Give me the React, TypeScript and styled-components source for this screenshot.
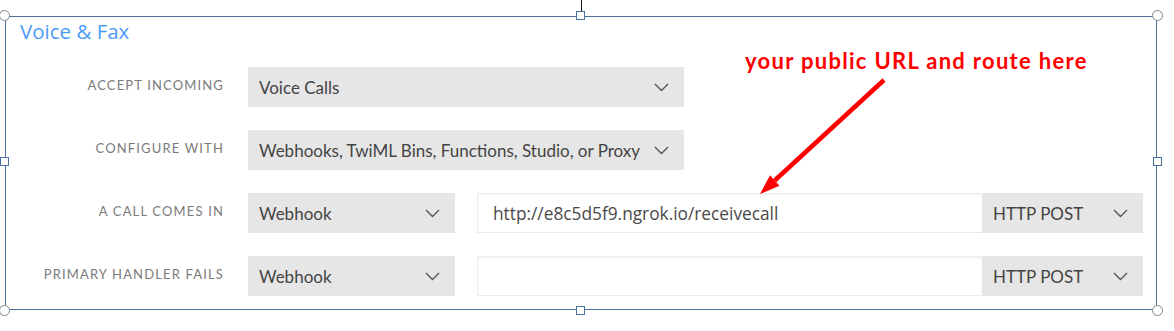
import styled, { createGlobalStyle } from 'styled-components'

const GlobalStyle = createGlobalStyle`
  body {
    margin: 0;
    background: #ffffff;
    font-family: Lato, "Open Sans", sans-serif;
  }
`

const Chevron = () => (
  <svg width="15" height="9" viewBox="0 0 15 9" fill="none">
    <path d="M1 1l6.5 6.5L14 1" stroke="#555" strokeWidth="1.4" />
  </svg>
)

const Select = ({ value, width }: { value: string; width: number }) => (
  <SelectBox $width={width}>
    <span>{value}</span>
    <Chevron />
  </SelectBox>
)

const App = () => {
  return (
    <Page>
      <GlobalStyle />
      <Frame>
        <Title>Voice &amp; Fax</Title>
        <Form>
          <Row>
            <Label>Accept incoming</Label>
            <Select value="Voice Calls" width={436} />
          </Row>
          <Row>
            <Label>Configure with</Label>
            <Select value="Webhooks, TwiML Bins, Functions, Studio, or Proxy" width={436} />
          </Row>
          <Row>
            <Label>A call comes in</Label>
            <Select value="Webhook" width={207} />
            <UrlGroup>
              <UrlInput>http://e8c5d5f9.ngrok.io/receivecall</UrlInput>
              <Select value="HTTP POST" width={161} />
            </UrlGroup>
          </Row>
          <Row>
            <Label>Primary handler fails</Label>
            <Select value="Webhook" width={207} />
            <UrlGroup>
              <UrlInput />
              <Select value="HTTP POST" width={161} />
            </UrlGroup>
          </Row>
        </Form>

        <Note>your public URL and route here</Note>
        <Arrow width="140" height="130" viewBox="0 0 140 130">
          <line x1="134" y1="7" x2="24.7" y2="107.5" stroke="#ff0000" strokeWidth="4.5" />
          <polygon points="10,121 20,102.3 29.4,112.7" fill="#ff0000" />
        </Arrow>

        {/* selection handles */}
        <RotateStem />
        <Corner $x="left" $y="top" />
        <Corner $x="right" $y="top" />
        <Corner $x="left" $y="bottom" />
        <Corner $x="right" $y="bottom" />
        <EdgeHandle style={{ left: 570, top: -6 }} />
        <EdgeHandle style={{ left: 570, bottom: -6 }} />
        <EdgeHandle style={{ left: -6, top: 140 }} />
        <EdgeHandle style={{ right: -6, top: 140 }} />
      </Frame>
    </Page>
  )
}

const Page = styled.div`
  width: 1174px;
  height: 331px;
  padding: 16px 0 0 5px;
  box-sizing: border-box;
`
const Frame = styled.div`
  position: relative;
  box-sizing: border-box;
  width: 1152px;
  height: 294px;
  border: 1px solid #4a6f9b;
  padding: 4px 12px 0 0;
`
const Title = styled.h1`
  margin: 0 0 26px 14px;
  font-family: "Open Sans", sans-serif;
  font-weight: 400;
  font-size: 20.5px;
  line-height: 20px;
  color: #4a9cf6;
`
const Form = styled.div`
  display: flex;
  flex-direction: column;
  gap: 23px;
`
const Row = styled.div`
  display: flex;
  align-items: center;
  height: 40px;
`
const Label = styled.div`
  width: 218px;
  margin-right: 24px;
  text-align: right;
  text-transform: uppercase;
  font-size: 13px;
  letter-spacing: 1.15px;
  color: #7b7b7b;
  padding-bottom: 4px;
`
const SelectBox = styled.div<{ $width: number }>`
  box-sizing: border-box;
  width: ${p => p.$width}px;
  height: 40px;
  display: flex;
  align-items: center;
  justify-content: space-between;
  padding: 0 15px 0 11px;
  background: #e6e6e6;
  font-size: 17px;
  color: #444;
  white-space: nowrap;
`
const UrlGroup = styled.div`
  display: flex;
  margin-left: 22px;
`
const UrlInput = styled.div`
  box-sizing: border-box;
  width: 505px;
  height: 40px;
  display: flex;
  align-items: center;
  padding-left: 15px;
  border: 1px solid #ececec;
  border-right: none;
  box-shadow: inset 0 2px 2px rgba(0, 0, 0, 0.04);
  font-family: "Open Sans", sans-serif;
  font-size: 17.3px;
  color: #4a4a4a;
`
const Note = styled.div`
  position: absolute;
  left: 739px;
  top: 30px;
  font-family: Lato, sans-serif;
  font-weight: 700;
  font-size: 22px;
  letter-spacing: 1.3px;
  color: #ff0000;
  white-space: nowrap;
`
const Arrow = styled.svg`
  position: absolute;
  left: 744px;
  top: 56px;
`
const RotateStem = styled.div`
  position: absolute;
  left: 575px;
  top: -17px;
  width: 1px;
  height: 12px;
  background: #111;
`
const Corner = styled.div<{ $x: 'left' | 'right'; $y: 'top' | 'bottom' }>`
  position: absolute;
  ${p => p.$x}: -7px;
  ${p => p.$y}: -7px;
  width: 11px;
  height: 11px;
  box-sizing: border-box;
  border-radius: 50%;
  border: 1px solid #7c8b88;
  background: #fff;
`
const EdgeHandle = styled.div`
  position: absolute;
  width: 9px;
  height: 9px;
  box-sizing: border-box;
  border: 1px solid #4a6f9b;
  background: #fff;
`

export default App
